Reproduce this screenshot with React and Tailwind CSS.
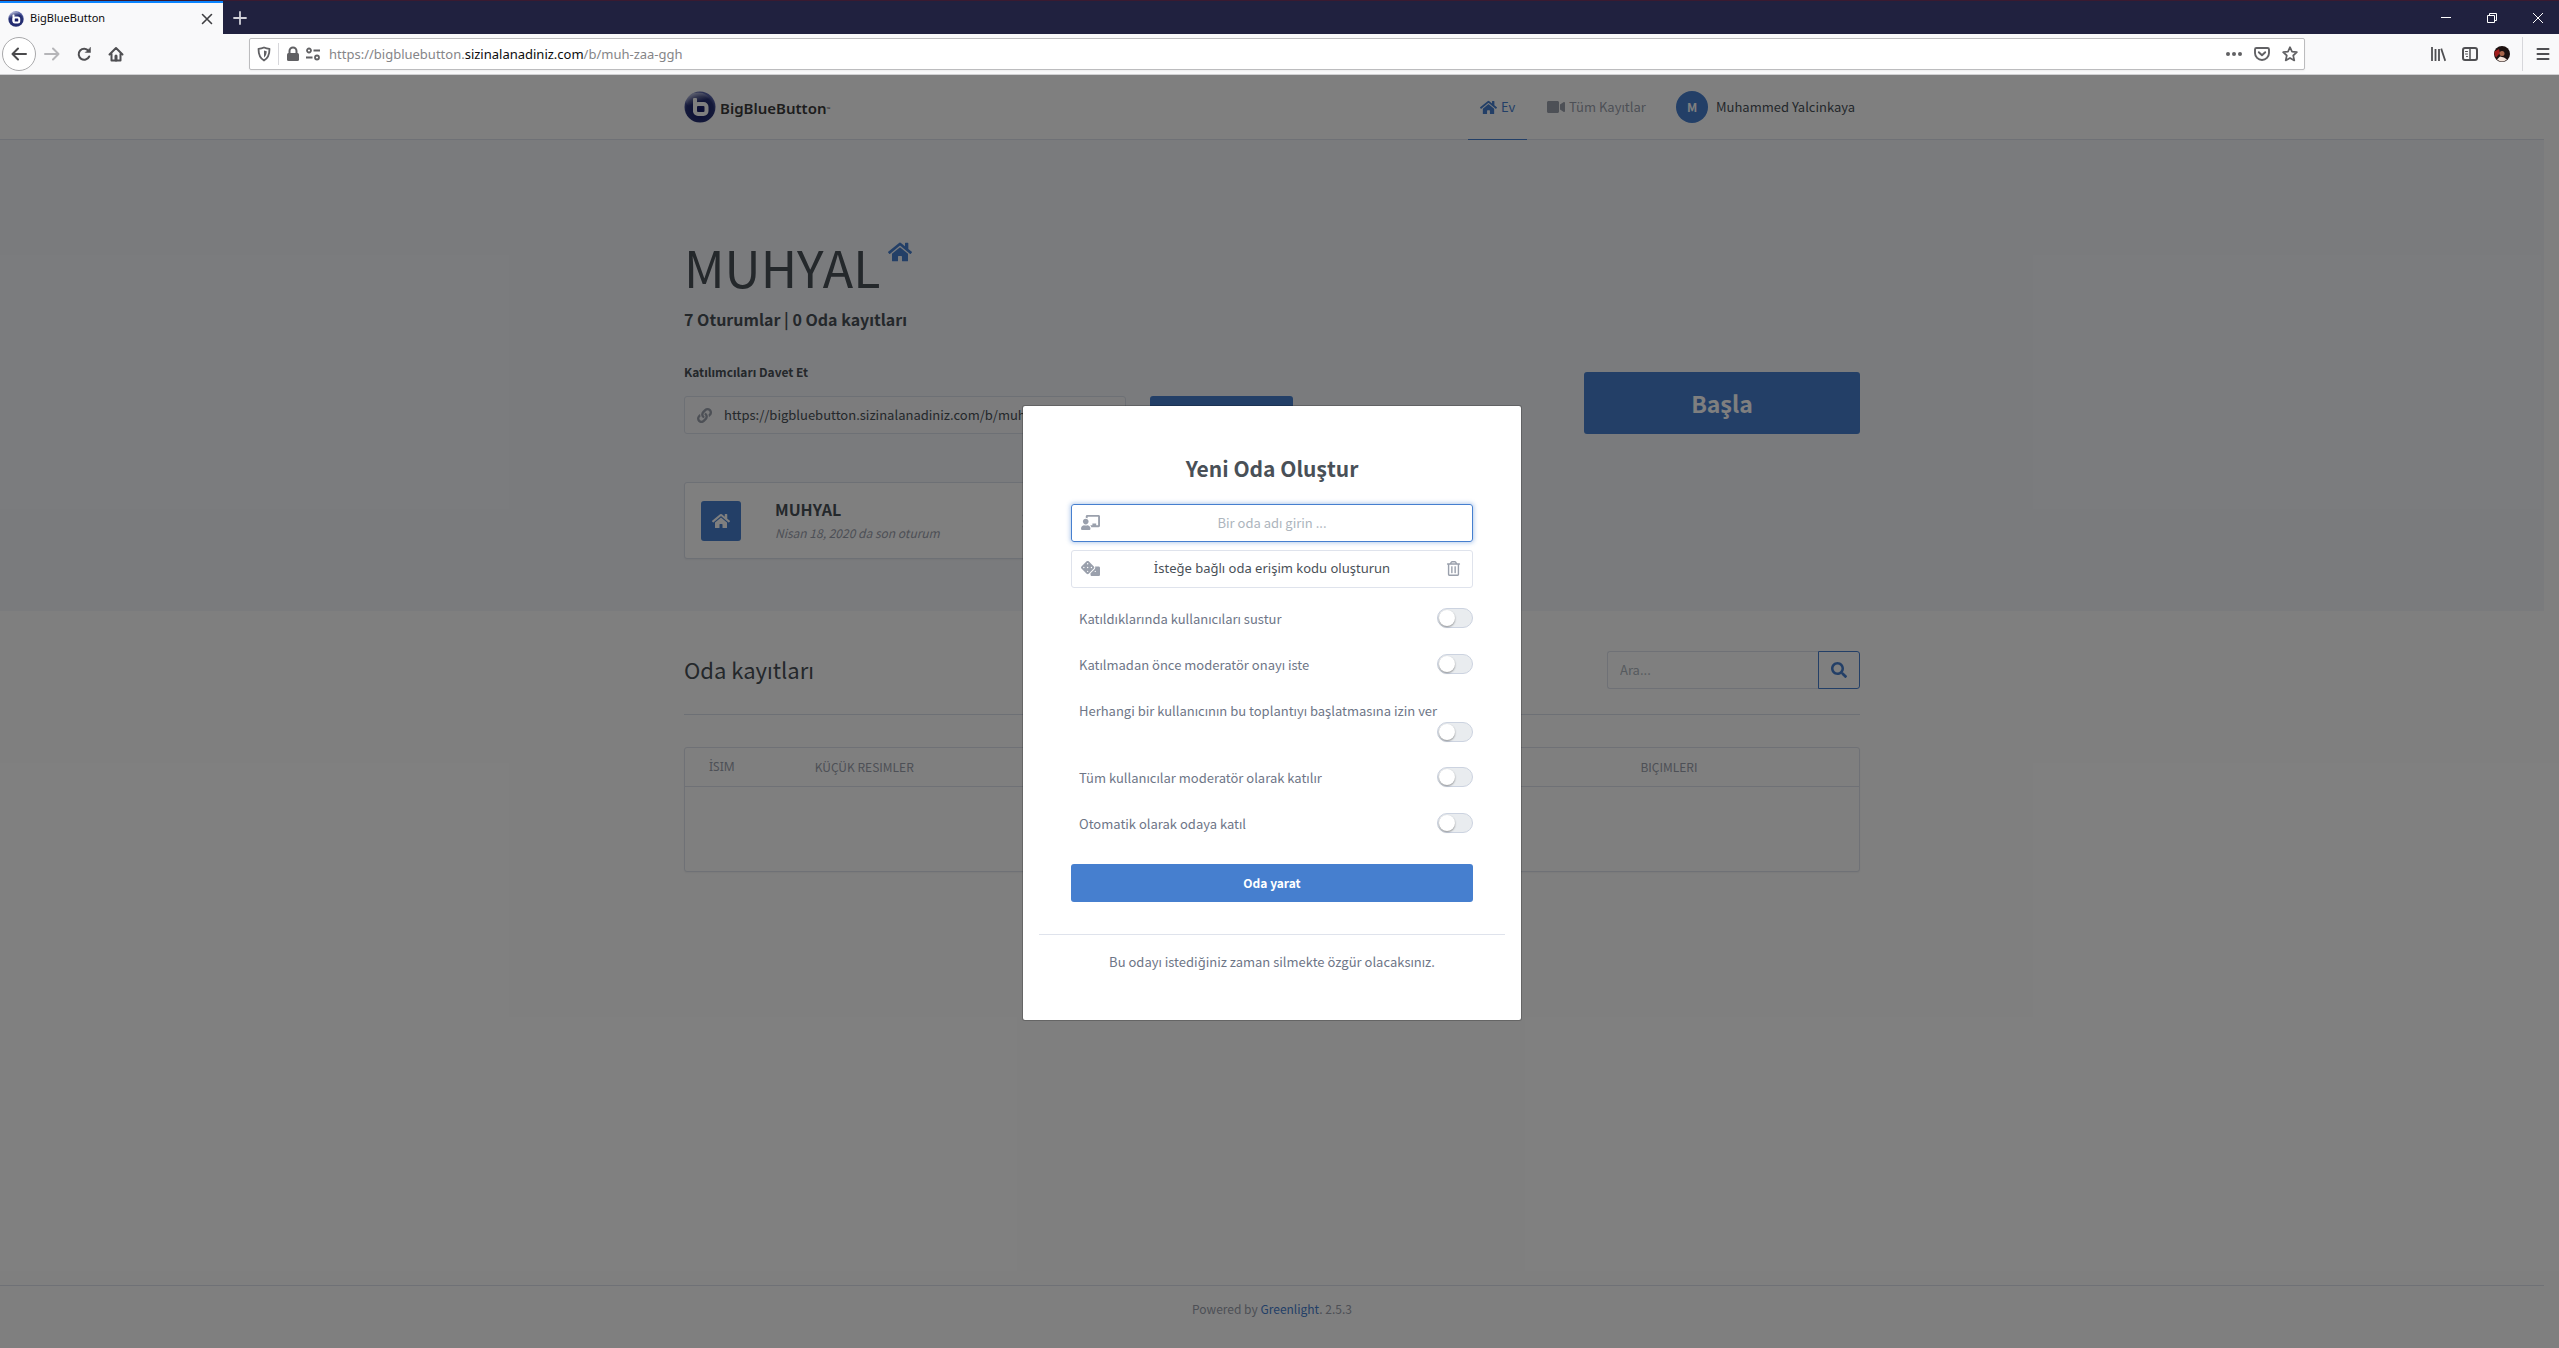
import {
    FaHome, FaVideo, FaLink, FaEllipsisV, FaSearch, FaChalkboardTeacher, FaDice, FaRegTrashAlt,
} from 'react-icons/fa';

const ROOM_URL = 'https://bigbluebutton.sizinalanadiniz.com/b/muh-zaa-ggh';

const roomOptions = [
    { id: 'mute', label: 'Katıldıklarında kullanıcıları sustur' },
    { id: 'approval', label: 'Katılmadan önce moderatör onayı iste' },
    { id: 'anyone-start', label: 'Herhangi bir kullanıcının bu toplantıyı başlatmasına izin ver' },
    { id: 'all-moderators', label: 'Tüm kullanıcılar moderatör olarak katılır' },
    { id: 'auto-join', label: 'Otomatik olarak odaya katıl' },
];

// Round blue BigBlueButton mark
function LogoMark({ className }) {
    return (
        <svg viewBox="0 0 32 32" className={className} aria-hidden="true">
            <defs>
                <radialGradient id="ball" cx="0.5" cy="0.6" r="0.55">
                    <stop offset="0" stopColor="#141a66" />
                    <stop offset="0.8" stopColor="#283274" />
                    <stop offset="1" stopColor="#5964a8" />
                </radialGradient>
                <linearGradient id="shine" x1="0.2" y1="0" x2="0.5" y2="0.6">
                    <stop offset="0" stopColor="#fff" stopOpacity="0.6" />
                    <stop offset="1" stopColor="#fff" stopOpacity="0" />
                </linearGradient>
            </defs>
            <circle cx="16" cy="16" r="15.5" fill="url(#ball)" />
            <ellipse cx="14" cy="10" rx="12" ry="8.5" fill="url(#shine)" />
            <rect x="9" y="7" width="4" height="14" rx="1" fill="#fff" />
            <rect x="11" y="13" width="11.5" height="10" rx="3" fill="none" stroke="#fff" strokeWidth="4" />
        </svg>
    );
}

// Browser tab strip + window controls
function TabStrip() {
    return (
        <div className="flex h-[34px] overflow-hidden border-t border-[#3a1a30] bg-[#20213f]">
            <div className="flex w-[223px] items-center border-t-2 border-[#0a84ff] bg-[#f9f9fa] pr-2.5 pl-2">
                <LogoMark className="size-4" />
                <span className="ml-1.5 flex-1 text-[11px] text-[#0c0c0d]">BigBlueButton</span>
                <button aria-label="Sekmeyi kapat" className="text-[#3f3f42]">
                    <svg viewBox="0 0 12 12" className="size-3" stroke="currentColor" strokeWidth="1.6" strokeLinecap="round">
                        <path d="M1.5 1.5l9 9M10.5 1.5l-9 9" />
                    </svg>
                </button>
            </div>
            <button aria-label="Yeni sekme" className="px-2.5 text-[#d0d0d8]">
                <svg viewBox="0 0 14 14" className="size-3.5" stroke="currentColor" strokeWidth="1.8" strokeLinecap="round">
                    <path d="M7 1v12M1 7h12" />
                </svg>
            </button>
            <div className="-mr-0.5 ml-auto flex text-white">
                <button aria-label="Simge durumuna küçült" className="flex w-[46px] items-center justify-center">
                    <svg viewBox="0 0 10 10" className="size-2.5" stroke="currentColor"><path d="M0 4.5h10" /></svg>
                </button>
                <button aria-label="Geri yükle" className="flex w-[46px] items-center justify-center">
                    <svg viewBox="0 0 10 10" className="size-2.5" fill="none" stroke="currentColor">
                        <path d="M0.5 2.5h7v7h-7zM2.5 2.5v-2h7v7h-2" />
                    </svg>
                </button>
                <button aria-label="Kapat" className="flex w-[46px] items-center justify-center">
                    <svg viewBox="0 0 10 10" className="size-2.5" stroke="currentColor"><path d="M0 0l10 10M10 0L0 10" /></svg>
                </button>
            </div>
        </div>
    );
}

function ToolButton({ label, className = 'text-[#4f4f52]', children }) {
    return (
        <button aria-label={label} className={`flex size-8 items-center justify-center ${className}`}>
            <svg viewBox="0 0 16 16" className="size-4" fill="none" stroke="currentColor" strokeWidth="2"
                strokeLinecap="round" strokeLinejoin="round">
                {children}
            </svg>
        </button>
    );
}

function Toolbar() {
    return (
        <div className="flex h-[41px] items-center border-b border-[#d0d0d2] bg-[#f9f9fa]">
            <button aria-label="Geri" className="ml-0.5 flex size-[34px] items-center justify-center rounded-full border border-[#a9a9ab] bg-white text-[#4a4a4c]">
                <svg viewBox="0 0 16 16" className="size-4" fill="none" stroke="currentColor" strokeWidth="2" strokeLinecap="round" strokeLinejoin="round">
                    <path d="M15 8H1.5M7 2.5L1.5 8 7 13.5" />
                </svg>
            </button>
            <ToolButton label="İleri" className="text-[#b5b5b8]">
                <path d="M1 8h13.5M9 2.5L14.5 8 9 13.5" />
            </ToolButton>
            <ToolButton label="Yenile">
                <path d="M13.2 10.5A5.5 5.5 0 1 1 12.5 4.8" />
                <path d="M14.5 1.5v5h-5z" fill="currentColor" strokeWidth="0.5" />
            </ToolButton>
            <ToolButton label="Ana sayfa">
                <path d="M1.5 8.5L8 2l6.5 6.5M3.5 8v6.5h9V8" />
                <path d="M8 14v-4" strokeWidth="3" />
            </ToolButton>

            {/* Address bar */}
            <div className="mx-[117px] flex h-8 flex-1 items-center rounded-xs border border-[#bcbcbe] bg-white px-1.5 text-[#616164] shadow-xs">
                <svg viewBox="0 0 16 16" className="size-4" fill="none" stroke="currentColor" strokeWidth="1.8" strokeLinejoin="round">
                    <path d="M8 1.5c2 .9 3.6 1.2 5.5 1.3 0 5.7-1.4 9.5-5.5 11.7C3.9 12.3 2.5 8.5 2.5 2.8 4.4 2.7 6 2.4 8 1.5z" />
                    <path d="M8 4.5v7c1.8-1.3 2.6-3.3 2.7-6.2z" fill="currentColor" stroke="none" />
                </svg>
                <span className="ml-1.5 h-[22px] w-px bg-[#d7d7db]" />
                <svg viewBox="0 0 16 16" className="ml-1.5 size-4" fill="currentColor">
                    <rect x="2" y="7" width="12" height="8" rx="1.5" />
                    <path d="M4.5 8V5a3.5 3.5 0 0 1 7 0v3" fill="none" stroke="currentColor" strokeWidth="2" />
                </svg>
                <svg viewBox="0 0 16 16" className="ml-1 size-4" fill="none" stroke="currentColor" strokeWidth="1.8">
                    <circle cx="4" cy="4.5" r="2" /><path d="M8.5 4.5H15M1 11.5h6.5" /><circle cx="12" cy="11.5" r="2" />
                </svg>
                <span className="ml-2 flex-1 pt-0.5 text-[13px] text-[#858588]">
                    https://bigbluebutton.<span className="text-[#0c0c0d]">sizinalanadiniz.com</span>/b/muh-zaa-ggh
                </span>
                <div className="flex gap-3">
                    <svg viewBox="0 0 16 16" className="size-4" fill="currentColor">
                        <circle cx="2" cy="8" r="2" /><circle cx="8" cy="8" r="2" /><circle cx="14" cy="8" r="2" />
                    </svg>
                    <svg viewBox="0 0 16 16" className="size-4" fill="none" stroke="currentColor" strokeWidth="1.9" strokeLinecap="round" strokeLinejoin="round">
                        <path d="M2.5 2h11a1.5 1.5 0 0 1 1.5 1.5V7A7 7 0 0 1 1 7V3.5A1.5 1.5 0 0 1 2.5 2zM4.8 6.2L8 9.3l3.2-3.1" />
                    </svg>
                    <svg viewBox="0 0 16 16" className="size-4" fill="none" stroke="currentColor" strokeWidth="1.7" strokeLinejoin="round">
                        <path d="M8 1.2l2 4.5 4.9.5-3.7 3.3 1.1 4.9L8 11.9l-4.3 2.5 1.1-4.9L1.1 6.2 6 5.7z" />
                    </svg>
                </div>
            </div>

            <ToolButton label="Kitaplık">
                <path d="M2 2v12M5.5 4v10M9 4v10M11.5 3.5L15 14" strokeLinecap="square" strokeWidth="1.8" />
            </ToolButton>
            <ToolButton label="Kenar çubuğu">
                <rect x="1" y="2" width="14" height="12" rx="2" />
                <path d="M8 2v12" strokeWidth="1.5" />
                <path d="M3.5 5.5h2M3.5 8h2M4.5 10.5h1" strokeWidth="1" />
            </ToolButton>
            <button aria-label="Hesap" className="flex size-8 items-center justify-center">
                <svg viewBox="0 0 16 16" className="size-4">
                    <circle cx="8" cy="8" r="8" fill="#1d1110" />
                    <path d="M0.5 5.5L5 3l1 4-4 4.5A8 8 0 0 1 .5 5.5z" fill="#a01c1c" />
                    <path d="M3 13.5l3-3 4 1 3 2a8 8 0 0 1-10 0z" fill="#f3e2d8" />
                    <circle cx="8" cy="7.5" r="2.5" fill="#a8654a" />
                </svg>
            </button>
            <span className="mx-1 h-[34px] w-px bg-[#d7d7db]" />
            <ToolButton label="Menü">
                <path d="M2.5 3h11M2.5 8h11M2.5 13h11" />
            </ToolButton>
        </div>
    );
}

function PageHeader() {
    return (
        <header className="border-b border-[#dfe3ec] bg-white">
            <div className="mx-auto flex h-16 w-full max-w-[1176px] items-center">
                <a href="#home" className="flex items-center gap-1">
                    <LogoMark className="size-8" />
                    <span className="pt-0.5 font-['Noto_Sans'] text-[15px] font-semibold text-[#3b3b3b]">
                        BigBlueButton<sup className="text-[5px]">™</sup>
                    </span>
                </a>
                <nav className="ml-auto flex h-full gap-2">
                    <a href="#home" className="-mb-px flex w-[59px] items-center gap-1 border-b border-[#467fcf] px-3 text-[#467fcf]">
                        <FaHome className="size-[17px] shrink-0" /> Ev
                    </a>
                    <a href="#recordings" className="flex w-[125px] items-center gap-1 px-3 text-[#9aa0ac]">
                        <FaVideo className="size-[18px] shrink-0" />
                        <span className="whitespace-nowrap">Tüm Kayıtlar</span>
                    </a>
                </nav>
                <button className="ml-4 flex items-center gap-2 text-[#495057]">
                    <span className="flex size-8 items-center justify-center rounded-full bg-[#467fcf] text-xs font-bold text-white">M</span>
                    <span className="w-36 text-left">Muhammed Yalcinkaya</span>
                </button>
            </div>
        </header>
    );
}

function Hero() {
    return (
        <section className="bg-[#f5f7fb] pt-24 pb-13">
            <div className="mx-auto w-full max-w-[1176px]">
                <div className="flex items-start gap-2">
                    <h1 className="text-[50px] leading-[60px]">MUHYAL</h1>
                    <FaHome className="mt-1 size-6 text-[#467fcf]" />
                </div>
                <h4 className="mt-[11px] text-base leading-6 font-bold">7 Oturumlar | 0 Oda kayıtları</h4>

                <div className="mt-[31px] flex items-end">
                    <div>
                        <label htmlFor="invite-url" className="block text-xs leading-5 font-bold">Katılımcıları Davet Et</label>
                        <div className="mt-3.5 flex h-[38px] w-[442px] items-center rounded-[3px] border border-[#dbe0ea] bg-[#f8f9fa] px-3">
                            <FaLink className="size-[15px] text-[#9aa0ac]" />
                            <input id="invite-url" readOnly value={ROOM_URL} className="ml-3 flex-1 bg-transparent outline-none" />
                        </div>
                    </div>
                    <button aria-label="Kopyala" className="ml-6 h-[38px] w-[143px] rounded-[3px] bg-[#467fcf]" />
                    <button className="ml-auto h-[62px] w-[276px] rounded-[3px] bg-[#467fcf] text-[23px] font-bold text-white">Başla</button>
                </div>

                {/* Room cards */}
                <div className="mt-12 grid grid-cols-3 gap-6">
                    <div className="flex h-[77px] items-center rounded-[3px] border border-[#dbe0ea] bg-white px-4 shadow-xs">
                        <span className="flex size-10 items-center justify-center rounded-[3px] bg-[#467fcf] text-white">
                            <FaHome className="size-[18px]" />
                        </span>
                        <div className="ml-[34px] flex-1">
                            <h4 className="text-base leading-5 font-bold">MUHYAL</h4>
                            <p className="mt-1 text-xs leading-5 text-[#9aa0ac] italic">Nisan 18, 2020 da son oturum</p>
                        </div>
                        <button aria-label="Oda seçenekleri" className="mr-2.5 text-[#6e7687]"><FaEllipsisV className="size-4" /></button>
                    </div>
                </div>
            </div>
        </section>
    );
}

function Recordings() {
    return (
        <section className="mx-auto w-full max-w-[1176px] flex-1 pt-10">
            <div className="flex items-center justify-between">
                <h2 className="pb-0.5 text-[22px] leading-8">Oda kayıtları</h2>
                <form className="flex h-[38px] w-[253px]">
                    <input aria-label="Ara" placeholder="Ara..." className="min-w-0 flex-1 rounded-l-[3px] border border-r-0 border-[#dfe3ec] px-3 outline-none placeholder:text-[#adb5bd]" />
                    <button aria-label="Ara" className="flex w-[42px] items-center justify-center rounded-r-[3px] border border-[#467fcf] text-[#467fcf]">
                        <FaSearch className="size-4" />
                    </button>
                </form>
            </div>
            <hr className="mt-[25px] border-[#dbe0ea]" />
            <div className="mt-8 h-[125px] rounded-[3px] border border-[#dfe3ec] bg-white shadow-xs">
                <table className="w-full table-fixed text-left text-xs text-[#9aa0ac]">
                    <thead>
                        <tr className="h-[38px] border-b border-[#dfe3ec]">
                            <th className="w-[9%] pl-6 font-['Noto_Sans'] font-normal">İSIM</th>
                            <th className="w-[70%] pl-6 font-normal">KÜÇÜK RESIMLER</th>
                            <th className="pl-7 font-normal">BIÇIMLERI</th>
                        </tr>
                    </thead>
                    <tbody />
                </table>
            </div>
        </section>
    );
}

function CreateRoomModal() {
    return (
        <div className="absolute inset-0 flex items-center justify-center bg-black/50 pt-0.5 pr-[15px]">
            <div role="dialog" aria-labelledby="modal-title" className="w-[500px] rounded-[3px] border border-black/20 bg-white bg-clip-padding px-12 py-12">
                <h3 id="modal-title" className="text-center text-[21px] leading-7 font-bold">Yeni Oda Oluştur</h3>

                <form>
                    <label className="mt-[22px] flex h-[38px] items-center rounded-[3px] border border-[#467fcf] px-[9px] shadow-[0_0_4px_1px_rgba(70,127,207,0.4)]">
                        <FaChalkboardTeacher className="size-[19px] text-[#9aa0ac]" />
                        <input aria-label="Oda adı" placeholder="Bir oda adı girin ..." className="mr-[19px] flex-1 text-center outline-none placeholder:text-[#adb5bd]" />
                    </label>
                    <div className="mt-2 flex h-[38px] items-center rounded-[3px] border border-[#dfe3ec] px-[9px]">
                        <button type="button" aria-label="Kod oluştur" className="text-[#9aa0ac]"><FaDice className="size-[19px]" /></button>
                        <span className="flex-1 text-center font-['Noto_Sans']">İsteğe bağlı oda erişim kodu oluşturun</span>
                        <button type="button" aria-label="Kodu sil" className="flex w-[19px] justify-center text-[#9aa0ac]"><FaRegTrashAlt className="size-[15px]" /></button>
                    </div>

                    <div className="mt-5 flex flex-col gap-[25px]">
                        {roomOptions.map((option) => (
                            <div key={option.id} className="flex flex-wrap items-center justify-between gap-x-2 gap-y-px pl-2">
                                <label htmlFor={option.id} className="leading-[21px] text-[#6e7687]">{option.label}</label>
                                <input
                                    id={option.id}
                                    type="checkbox"
                                    role="switch"
                                    className="ml-auto h-5 w-9 appearance-none rounded-full border border-[#ccd3e0] bg-[#e9ecef] before:m-px before:block before:size-4 before:rounded-full before:bg-white before:shadow-[0_1px_2px_rgba(0,0,0,0.4)] checked:bg-[#467fcf] checked:before:ml-[17px]"
                                />
                            </div>
                        ))}
                    </div>

                    <button type="submit" className="mt-[30px] h-[38px] w-full rounded-[3px] bg-[#467fcf] text-xs font-bold text-white">Oda yarat</button>
                </form>

                <hr className="-mx-8 mt-8 border-[#dfe3ec]" />
                <p className="mt-[17px] text-center leading-5 text-[#6e7687]">Bu odayı istediğiniz zaman silmekte özgür olacaksınız.</p>
            </div>
        </div>
    );
}

export default function App() {
    return (
        <div className="flex min-h-screen flex-col bg-white font-['Noto_Sans','Open_Sans',sans-serif]">
            <TabStrip />
            <Toolbar />
            <div className="relative flex flex-1 flex-col font-['Noto_Sans_CJK_JP','Noto_Sans',sans-serif] text-[13px] text-[#495057]">
                {/* room for the page's scrollbar on the right */}
                <div className="mr-[15px] flex flex-1 flex-col">
                    <PageHeader />
                    <Hero />
                    <Recordings />
                    <footer className="h-[63px] border-t border-[#dfe3ec] pt-[13px] text-center text-xs leading-5 text-[#9aa0ac]">
                        Powered by <a href="#greenlight" className="text-[#467fcf]">Greenlight</a>. 2.5.3
                    </footer>
                </div>
                <CreateRoomModal />
            </div>
        </div>
    );
}
